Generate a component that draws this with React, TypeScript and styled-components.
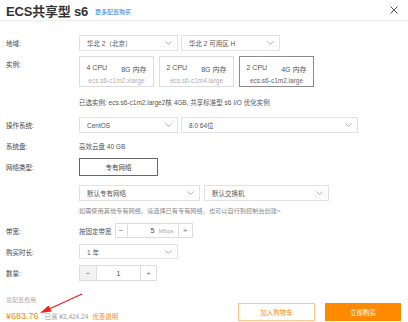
import styled, { createGlobalStyle } from "styled-components";

const GlobalStyle = createGlobalStyle`
    html, body {
        margin: 0;
        padding: 0;
        background: #ffffff;
    }
    body {
        font-family: "Liberation Sans", "Noto Sans CJK SC", sans-serif;
        color: #333333;
    }
`

const instances = [
    { cpu: "4 CPU", mem: "8G 内存", spec: "ecs.s6-c1m2.xlarge", selected: false },
    { cpu: "2 CPU", mem: "8G 内存", spec: "ecs.s6-c1m4.large", selected: false },
    { cpu: "2 CPU", mem: "4G 内存", spec: "ecs.s6-c1m2.large", selected: true },
]

function Chevron() {
    return <svg width="7" height="4" viewBox="0 0 7 4">
        <path d="M0.5 0.5 L3.5 3.3 L6.5 0.5" fill="none" stroke="#9a9a9a" strokeWidth="0.8" />
    </svg>
}

function Select({ text, width, height = 16 }: { text: string, width: number, height?: number }) {
    return <SelectBox $w={width} $h={height}>
        <span>{text}</span>
        <Chevron />
    </SelectBox>
}

function App() {
    return (
        <>
            <GlobalStyle />
            <Dialog>
                <Header>
                    <Title>ECS共享型 s6</Title>
                    <MoreLink>更多配置购买</MoreLink>
                    <Close>
                        <svg width="8" height="8" viewBox="0 0 8 8">
                            <path d="M0.5 0.5 L7.5 7.5 M7.5 0.5 L0.5 7.5" stroke="#444" strokeWidth="0.9" />
                        </svg>
                    </Close>
                </Header>

                <Form>
                    <Row $mt={14} $h={16}>
                        <Label>地域:</Label>
                        <Inline $gap={3}>
                            <Select text="华北 2（北京）" width={99} />
                            <Select text="华北 2 可用区 H" width={99} />
                        </Inline>
                    </Row>

                    <Row $mt={5} $h={31} $top>
                        <Label $pt={3}>实例:</Label>
                        <Inline $gap={5}>
                            {instances.map((item) => (
                                <Card key={item.spec} $selected={item.selected}>
                                    <CardMain>
                                        <span>{item.cpu}</span>
                                        <span>{item.mem}</span>
                                    </CardMain>
                                    <CardSpec $selected={item.selected}>{item.spec}</CardSpec>
                                </Card>
                            ))}
                        </Inline>
                    </Row>

                    <Row $mt={9} $h={12}>
                        <Label />
                        <Note>已选实例: ecs.s6-c1m2.large2核 4GB, 共享标准型 s6 I/O 优化实例</Note>
                    </Row>

                    <Row $mt={9} $h={16}>
                        <Label>操作系统:</Label>
                        <Inline $gap={3}>
                            <Select text="CentOS" width={99} />
                            <Select text="8.0 64位" width={177} />
                        </Inline>
                    </Row>

                    <Row $mt={7} $h={12}>
                        <Label>系统盘:</Label>
                        <Note>高效云盘 40 GB</Note>
                    </Row>

                    <Row $mt={6} $h={18}>
                        <Label>网络类型:</Label>
                        <ToggleButton>专有网络</ToggleButton>
                    </Row>

                    <Row $mt={9} $h={16}>
                        <Label />
                        <Inline $gap={4}>
                            <Select text="默认专有网络" width={121} />
                            <Select text="默认交换机" width={125} />
                        </Inline>
                    </Row>

                    <Row $mt={4} $h={10}>
                        <Label />
                        <Help>如需使用其他专有网络，请选择已有专有网络，也可以自行到控制台创建&gt;</Help>
                    </Row>

                    <Row $mt={8} $h={15}>
                        <Label>带宽:</Label>
                        <Inline $gap={3}>
                            <Note>按固定带宽</Note>
                            <Stepper $h={15}>
                                <StepButton $w={11}>−</StepButton>
                                <StepValue $w={50}>
                                    <span>5</span>
                                    <Unit>Mbps</Unit>
                                </StepValue>
                                <StepButton $w={13}>+</StepButton>
                            </Stepper>
                        </Inline>
                    </Row>

                    <Row $mt={6} $h={15}>
                        <Label>购买时长:</Label>
                        <Select text="1 年" width={99} height={15} />
                    </Row>

                    <Row $mt={6} $h={16}>
                        <Label>数量:</Label>
                        <Stepper $h={16}>
                            <StepButton $w={16} $disabled>−</StepButton>
                            <StepValue $w={43}>1</StepValue>
                            <StepButton $w={15}>+</StepButton>
                        </Stepper>
                    </Row>
                </Form>

                <Footer>
                    <Summary>
                        <SummaryLabel>总配置费用</SummaryLabel>
                        <PriceLine>
                            <Price>¥683.76</Price>
                            <Saved>已省 ¥2,424.24</Saved>
                            <Discount>优惠说明</Discount>
                        </PriceLine>
                    </Summary>
                    <Actions>
                        <CartButton>加入购物车</CartButton>
                        <BuyButton>立即购买</BuyButton>
                    </Actions>
                </Footer>

                <Arrow width="50" height="24" viewBox="0 0 50 24">
                    <path d="M47 1 L12 17" stroke="#f0221a" strokeWidth="1.3" />
                    <path d="M5 20 L13.5 12.5 L16.5 18.5 Z" fill="#f0221a" />
                </Arrow>
            </Dialog>
        </>
    )
}

export default App

const Dialog = styled.div`
    position: relative;
    width: 408px;
    height: 322px;
    overflow: hidden;
    background: #ffffff;
`

const Header = styled.div`
    height: 20px;
    display: flex;
    align-items: center;
    padding: 0 6px;
    border-bottom: 1px solid #eeeeee;
    box-shadow: 0 1px 2px rgba(0, 0, 0, 0.03);
`

const Title = styled.div`
    font-size: 13px;
    font-weight: bold;
    color: #333333;
    letter-spacing: -0.2px;
`

const MoreLink = styled.a`
    margin-left: 7px;
    margin-top: 2px;
    font-size: 6px;
    color: #2b7de0;
`

const Close = styled.div`
    margin-left: auto;
    margin-right: 4px;
    display: flex;
    align-items: center;
`

const Form = styled.div`
    padding-left: 6px;
`

const Row = styled.div<{ $mt: number, $h: number, $top?: boolean }>`
    display: flex;
    align-items: ${props => props.$top ? "flex-start" : "center"};
    margin-top: ${props => props.$mt}px;
    height: ${props => props.$h}px;
`

const Label = styled.div<{ $pt?: number }>`
    width: 73px;
    flex-shrink: 0;
    font-size: 6.5px;
    color: #444444;
    padding-top: ${props => props.$pt || 0}px;
`

const Inline = styled.div<{ $gap: number }>`
    display: flex;
    align-items: center;
    gap: ${props => props.$gap}px;
`

const SelectBox = styled.div<{ $w: number, $h: number }>`
    box-sizing: border-box;
    width: ${props => props.$w}px;
    height: ${props => props.$h}px;
    border: 1px solid #e2e2e2;
    padding: 0 5px 0 7px;
    display: flex;
    align-items: center;
    justify-content: space-between;
    font-size: 6.5px;
    color: #555555;
`

const Card = styled.div<{ $selected: boolean }>`
    box-sizing: border-box;
    width: 75px;
    height: 31px;
    padding-top: 5px;
    border: 1px solid ${props => props.$selected ? "#8c8c8c" : "#dddddd"};
    display: flex;
    flex-direction: column;
    align-items: center;
    justify-content: center;
    gap: 3px;
`

const CardMain = styled.div`
    display: flex;
    gap: 14px;
    font-size: 7px;
    color: #555555;
`

const CardSpec = styled.div<{ $selected: boolean }>`
    font-size: 6.5px;
    color: ${props => props.$selected ? "#666666" : "#b0b0b0"};
`

const Note = styled.div`
    font-size: 6.5px;
    color: #555555;
    white-space: nowrap;
`

const Help = styled.div`
    font-size: 6.2px;
    color: #888888;
    white-space: nowrap;
`

const ToggleButton = styled.div`
    box-sizing: border-box;
    width: 79px;
    height: 18px;
    border: 1px solid #666666;
    display: flex;
    align-items: center;
    justify-content: center;
    font-size: 6.5px;
    color: #444444;
`

const Stepper = styled.div<{ $h: number }>`
    display: flex;
    height: ${props => props.$h}px;
    border: 1px solid #dddddd;
    box-sizing: border-box;
`

const StepButton = styled.div<{ $w: number, $disabled?: boolean }>`
    width: ${props => props.$w}px;
    display: flex;
    align-items: center;
    justify-content: center;
    font-size: 8px;
    color: #777777;
    background: ${props => props.$disabled ? "#f2f2f2" : "#ffffff"};
`

const StepValue = styled.div<{ $w: number }>`
    position: relative;
    width: ${props => props.$w}px;
    border-left: 1px solid #dddddd;
    border-right: 1px solid #dddddd;
    display: flex;
    align-items: center;
    justify-content: center;
    font-size: 7px;
    color: #444444;
`

const Unit = styled.span`
    position: absolute;
    right: 4px;
    font-size: 6px;
    color: #aaaaaa;
`

const Footer = styled.div`
    display: flex;
    justify-content: space-between;
    align-items: flex-end;
    padding: 0 7px 3px 6px;
    margin-top: 14px;
`

const Summary = styled.div`
    display: flex;
    flex-direction: column;
    gap: 7px;
`

const SummaryLabel = styled.div`
    font-size: 6px;
    color: #aaaaaa;
`

const PriceLine = styled.div`
    display: flex;
    align-items: baseline;
`

const Price = styled.span`
    font-size: 9px;
    color: #ff8a00;
`

const Saved = styled.span`
    margin-left: 6px;
    font-size: 6.5px;
    color: #999999;
`

const Discount = styled.span`
    margin-left: 4px;
    font-size: 6.5px;
    color: #ff8a00;
`

const Actions = styled.div`
    display: flex;
    gap: 10px;
`

const CartButton = styled.div`
    box-sizing: border-box;
    width: 77px;
    height: 18px;
    border: 1px solid #ffc68c;
    display: flex;
    align-items: center;
    justify-content: center;
    font-size: 6.5px;
    color: #ff8a00;
`

const BuyButton = styled.div`
    width: 76px;
    height: 18px;
    background: #ff8a00;
    display: flex;
    align-items: center;
    justify-content: center;
    font-size: 6.5px;
    color: #ffffff;
`

const Arrow = styled.svg`
    position: absolute;
    left: 35px;
    top: 293px;
`
